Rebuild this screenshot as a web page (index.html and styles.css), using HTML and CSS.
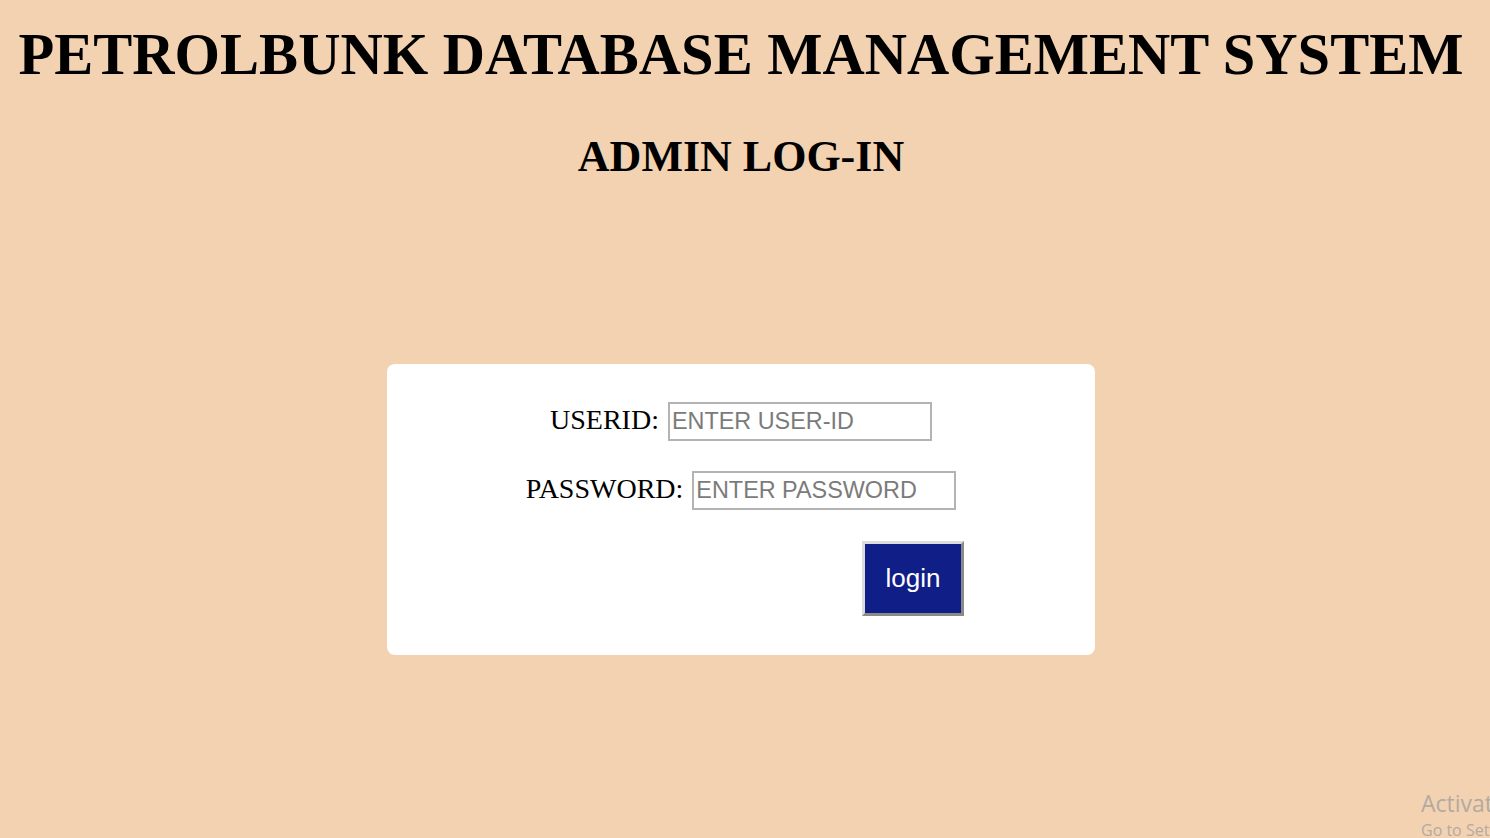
FILE: index.html
```html
<!DOCTYPE html>
<html lang="en">
<head>
<meta charset="utf-8">
<title>Admin Log-in</title>
<link rel="stylesheet" href="styles.css">
</head>
<body>
  <h1 class="title">PETROLBUNK DATABASE MANAGEMENT SYSTEM</h1>
  <h2 class="subtitle">ADMIN LOG-IN</h2>
  <form class="card">
    <div class="row">
      <label class="label" for="uid">USERID:</label>
      <input class="field" id="uid" type="text" placeholder="ENTER USER-ID">
    </div>
    <div class="row">
      <label class="label" for="pwd">PASSWORD:</label>
      <input class="field" id="pwd" type="password" placeholder="ENTER PASSWORD">
    </div>
    <div class="actions">
      <button class="btn" type="button">login</button>
    </div>
  </form>
  <div class="watermark">
    <div class="wm-big">Activate Windows</div>
    <div class="wm-small">Go to Settings to activate Windows.</div>
  </div>
</body>
</html>
```

FILE: styles.css
```css
html, body {
  margin: 0;
  padding: 0;
  height: 100%;
  overflow: hidden;
}

body {
  background: #f3d2b1;
  font-family: "Liberation Serif", "Times New Roman", serif;
  color: #000;
  position: relative;
  padding-right: 8px;
  box-sizing: border-box;
}

.title {
  margin: 21px 0 0;
  font-size: 58.5px;
  line-height: 67px;
  font-weight: bold;
  text-align: center;
  white-space: nowrap;
}

.subtitle {
  margin: 43px 0 0;
  font-size: 44px;
  line-height: 51px;
  font-weight: bold;
  text-align: center;
}

.card {
  width: 708px;
  margin: 182px auto 0;
  padding: 38px 0 39px;
  box-sizing: border-box;
  background: #fff;
  border-radius: 8px;
  display: flex;
  flex-direction: column;
  gap: 30px;
}

.row {
  display: flex;
  justify-content: center;
  align-items: center;
  gap: 9px;
  height: 39px;
}

.label {
  font-size: 28px;
  line-height: 39px;
  position: relative;
  top: -2px;
}

.field {
  width: 264px;
  height: 39px;
  box-sizing: border-box;
  border: 2px solid #b4b4b4;
  padding: 0 2px;
  font-family: "Liberation Sans", Arial, sans-serif;
  font-size: 23.4px;
  color: #333;
  background: #fff;
  outline: none;
}

.field::placeholder {
  color: #7b7b7b;
  opacity: 1;
}

.actions {
  display: flex;
  padding-left: 475px;
  margin-top: 1px;
}

.btn {
  width: 102px;
  height: 75px;
  box-sizing: border-box;
  background: #0f1f87;
  color: #fff;
  border: 3px solid;
  border-color: #dcdcdc #8a8a8a #8a8a8a #dcdcdc;
  font-family: "Liberation Sans", Arial, sans-serif;
  font-size: 26px;
  padding: 0;
  cursor: pointer;
}

.watermark {
  position: absolute;
  left: 1421px;
  top: 786px;
  color: #b3aaa1;
  font-family: "Open Sans", "Noto Sans", sans-serif;
  white-space: nowrap;
}

.wm-big {
  font-size: 23px;
  line-height: 34px;
}

.wm-small {
  font-size: 16px;
  line-height: 20px;
}
```
